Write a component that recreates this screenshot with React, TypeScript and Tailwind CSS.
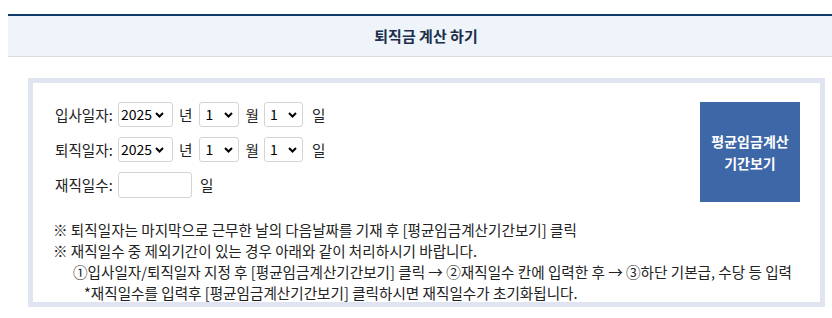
import { useState } from 'react'

const years = Array.from({ length: 40 }, (_, i) => 2000 + i)
const months = Array.from({ length: 12 }, (_, i) => i + 1)
const days = Array.from({ length: 31 }, (_, i) => i + 1)

function Select({ value, onChange, options, className, arrowRight }: {
    value: number
    onChange: (v: number) => void
    options: number[]
    className: string
    arrowRight: string
}) {
    return (
        <div className="relative">
            <select
                value={value}
                onChange={e => onChange(Number(e.target.value))}
                className={`appearance-none h-[25px] border border-[#d4d4d4] rounded-[3px] bg-white text-[14px] text-black outline-none ${className}`}
            >
                {options.map(o => <option key={o} value={o}>{o}</option>)}
            </select>
            <svg width="9" height="6" viewBox="0 0 9 6" className={`absolute top-[10px] pointer-events-none ${arrowRight}`}>
                <path d="M1 1l3.5 3.5L8 1" fill="none" stroke="black" strokeWidth="2" />
            </svg>
        </div>
    )
}

function FechaRow({ label }: { label: string }) {
    const [y, setY] = useState(2025)
    const [m, setM] = useState(1)
    const [d, setD] = useState(1)
    return (
        <div className="flex items-center h-[25px]">
            <span className="w-[63px]">{label}</span>
            <Select value={y} onChange={setY} options={years} className="w-[55px] pl-[2px]" arrowRight="right-[9px]" />
            <span className="ml-[6px] mr-[7px]">년</span>
            <Select value={m} onChange={setM} options={months} className="w-[40px] pl-[5px]" arrowRight="right-[6px]" />
            <span className="ml-[6px] mr-[5px]">월</span>
            <Select value={d} onChange={setD} options={days} className="w-[39px] pl-[5px]" arrowRight="right-[6px]" />
            <span className="ml-[9px]">일</span>
        </div>
    )
}

export default function App() {
    const [dias, setDias] = useState('')

    return (
        <div className="w-[832px] h-[318px] overflow-hidden bg-white text-[14.6px] text-[#222] font-['Noto_Sans_CJK_KR','Noto_Sans',sans-serif]">
            <div className="ml-2 mt-[14px] w-[836px] h-[43px] bg-[#eff3fa] border-t-2 border-[#0d3a66] border-b border-b-[#dcdcdc] flex items-center justify-center">
                <h1 className="text-[15px] font-semibold text-[#1c2f4a]">퇴직금 계산 하기</h1>
            </div>

            <div className="ml-[28px] mt-[21px] w-[797px] h-[229px] border-[5px] border-[#e0e4f1] bg-white pl-[20px] pr-[20px] pt-[19px]">
                <div className="flex justify-between">
                    <div className="flex flex-col gap-[10px] pl-[2px]">
                        <FechaRow label="입사일자:" />
                        <FechaRow label="퇴직일자:" />
                        <div className="flex items-center h-[26px]">
                            <span className="w-[63px]">재직일수:</span>
                            <input
                                type="text"
                                value={dias}
                                onChange={e => setDias(e.target.value)}
                                className="w-[74px] h-[26px] border border-[#d4d4d4] rounded-[3px] outline-none px-1"
                            />
                            <span className="ml-[8px]">일</span>
                        </div>
                    </div>
                    <button className="w-[100px] h-[100px] bg-[#3e67a8] text-white font-bold text-[14px] leading-[22px]">
                        평균임금계산<br />기간보기
                    </button>
                </div>

                <div className="mt-[17px] leading-[21px]">
                    <p>※ 퇴직일자는 마지막으로 근무한 날의 다음날짜를 기재 후 [평균임금계산기간보기] 클릭</p>
                    <p>※ 재직일수 중 제외기간이 있는 경우 아래와 같이 처리하시기 바랍니다.</p>
                    <p className="pl-[20px]">①입사일자/퇴직일자 지정 후 [평균임금계산기간보기] 클릭 → ②재직일수 칸에 입력한 후 → ③하단 기본급, 수당 등 입력</p>
                    <p className="pl-[31px]">*재직일수를 입력후 [평균임금계산기간보기] 클릭하시면 재직일수가 초기화됩니다.</p>
                </div>
            </div>
        </div>
    )
}
